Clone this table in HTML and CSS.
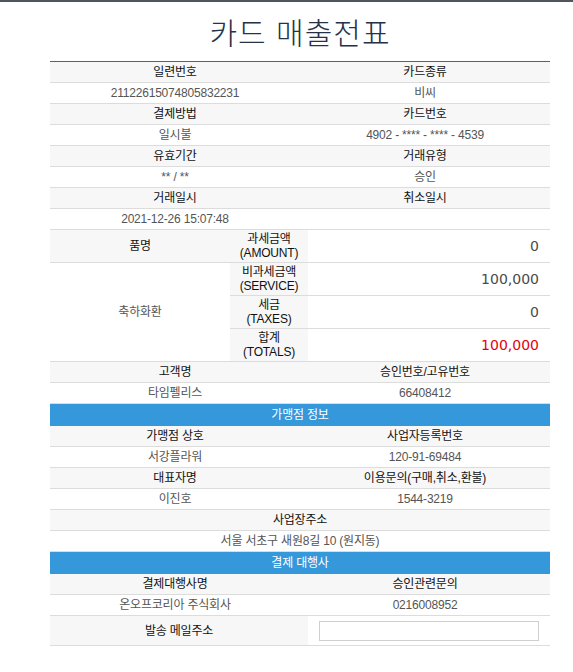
FILE: index.html
```html
<!DOCTYPE html>
<html lang="ko">
<head>
<meta charset="utf-8">
<title>카드 매출전표</title>
<link rel="stylesheet" href="styles.css">
</head>
<body>
<div class="topbar"></div>
<div class="wrap">
  <h1 class="title">카드 매출전표</h1>
  <table class="slip">
    <colgroup>
      <col class="c-a">
      <col class="c-b">
      <col class="c-c">
      <col class="c-d">
    </colgroup>
    <tbody>
      <tr class="hd"><th colspan="2">일련번호</th><th colspan="2">카드종류</th></tr>
      <tr class="vl"><td colspan="2">21122615074805832231</td><td colspan="2">비씨</td></tr>
      <tr class="hd"><th colspan="2">결제방법</th><th colspan="2">카드번호</th></tr>
      <tr class="vl"><td colspan="2">일시불</td><td colspan="2">4902 - **** - **** - 4539</td></tr>
      <tr class="hd"><th colspan="2">유효기간</th><th colspan="2">거래유형</th></tr>
      <tr class="vl"><td colspan="2">** / **</td><td colspan="2">승인</td></tr>
      <tr class="hd"><th colspan="2">거래일시</th><th colspan="2">취소일시</th></tr>
      <tr class="vl"><td colspan="2">2021-12-26 15:07:48</td><td colspan="2"></td></tr>

      <tr class="amt">
        <th class="item-head">품명</th>
        <th class="lbl" colspan="2">과세금액<br>(AMOUNT)</th>
        <td class="num">0</td>
      </tr>
      <tr class="amt">
        <td class="item" rowspan="3">축하화환</td>
        <th class="lbl" colspan="2">비과세금액<br>(SERVICE)</th>
        <td class="num">100,000</td>
      </tr>
      <tr class="amt">
        <th class="lbl" colspan="2">세금<br>(TAXES)</th>
        <td class="num">0</td>
      </tr>
      <tr class="amt">
        <th class="lbl" colspan="2">합계<br>(TOTALS)</th>
        <td class="num total">100,000</td>
      </tr>

      <tr class="hd"><th colspan="2">고객명</th><th colspan="2">승인번호/고유번호</th></tr>
      <tr class="vl"><td colspan="2">타임펠리스</td><td colspan="2">66408412</td></tr>

      <tr class="sec"><th colspan="4">가맹점 정보</th></tr>
      <tr class="hd"><th colspan="2">가맹점 상호</th><th colspan="2">사업자등록번호</th></tr>
      <tr class="vl"><td colspan="2">서강플라워</td><td colspan="2">120-91-69484</td></tr>
      <tr class="hd"><th colspan="2">대표자명</th><th colspan="2">이용문의(구매,취소,환불)</th></tr>
      <tr class="vl"><td colspan="2">이진호</td><td colspan="2">1544-3219</td></tr>
      <tr class="hd"><th colspan="4">사업장주소</th></tr>
      <tr class="vl"><td colspan="4">서울 서초구 새원8길 10 (원지동)</td></tr>

      <tr class="sec"><th colspan="4">결제 대행사</th></tr>
      <tr class="hd"><th colspan="2">결제대행사명</th><th colspan="2">승인관련문의</th></tr>
      <tr class="vl"><td colspan="2">온오프코리아 주식회사</td><td colspan="2">0216008952</td></tr>
      <tr class="mail">
        <th colspan="3">발송 메일주소</th>
        <td><input class="mail-input" type="text" aria-label="발송 메일주소"></td>
      </tr>
    </tbody>
  </table>
</div>
</body>
</html>
```

FILE: styles.css
```css
html, body {
  margin: 0;
  padding: 0;
  background: #ffffff;
}

body {
  font-family: "Liberation Sans", "Noto Sans CJK KR", sans-serif;
  font-size: 12px;
  color: #555;
}

.topbar {
  height: 2px;
  background: #51555d;
}

.wrap {
  width: 500px;
  margin-left: 50px;
}

.title {
  margin: 9px 0 10px;
  height: 40px;
  line-height: 40px;
  text-align: center;
  font-family: "Noto Sans CJK KR", sans-serif;
  font-size: 30px;
  font-weight: 300;
  color: #263248;
  letter-spacing: 1px;
}

.slip {
  width: 500px;
  table-layout: fixed;
  border-collapse: collapse;
  border-top: 1px solid #5f6166;
  letter-spacing: -0.2px;
}

.c-a { width: 180px; }
.c-b { width: 70px; }
.c-c { width: 8px; }
.c-d { width: 242px; }

.slip th,
.slip td {
  padding: 0;
  text-align: center;
  vertical-align: middle;
  font-weight: 400;
  border-bottom: 1px solid #dcdcdc;
  line-height: 14px;
}

.hd th {
  height: 20px;
  background: #f7f7f7;
  color: #111;
}

.vl td {
  height: 20px;
  background: #fff;
  color: #555;
}

.amt th,
.amt td {
  height: 32px;
}

.amt .item-head {
  background: #f7f7f7;
  color: #111;
}

.amt .item {
  background: #fff;
  color: #555;
}

.amt .lbl {
  background: #f7f7f7;
  color: #111;
  line-height: 14px;
}

.amt .num {
  text-align: right;
  padding-right: 11px;
  font-family: "DejaVu Sans", sans-serif;
  font-size: 14px;
  letter-spacing: 0;
  color: #4a4a4a;
  background: #fff;
}

.amt .num.total {
  color: #e3000f;
}

.sec th {
  height: 22px;
  background: #3498db;
  color: #fff;
  border-bottom: 0;
}

.mail th {
  height: 29px;
  background: #f7f7f7;
  color: #111;
}

.mail td {
  height: 29px;
  padding: 0 11px;
  background: #fff;
}

.mail-input {
  display: block;
  box-sizing: border-box;
  width: 100%;
  height: 20px;
  margin: 0;
  padding: 0 4px;
  border: 1px solid #cfcfcf;
  background: #fff;
  font: inherit;
}
```
